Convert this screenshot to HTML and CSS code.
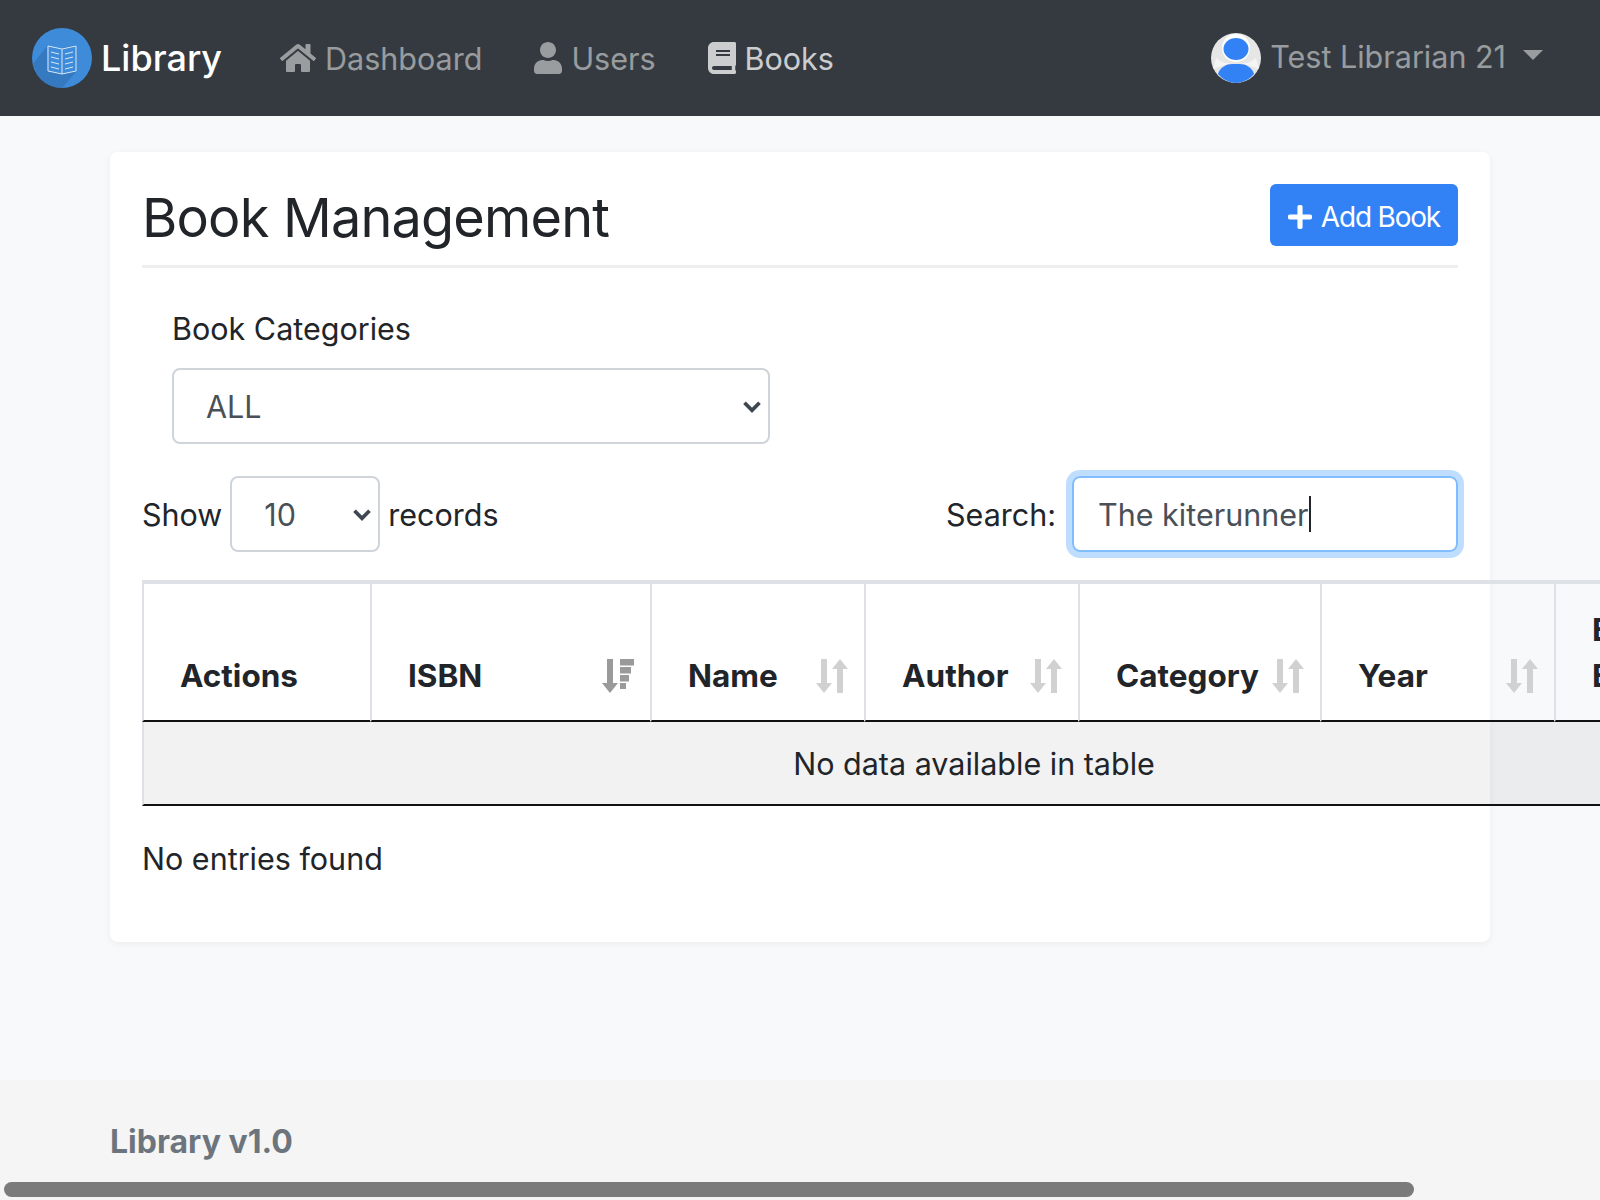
FILE: index.html
```html
<!DOCTYPE html>
<html lang="en">
<head>
  <meta charset="UTF-8">
  <title>Book Management</title>
  <link rel="stylesheet" href="styles.css">
</head>
<body>

  <nav class="navbar">
    <a class="brand">
      <svg class="brand-logo" viewBox="0 0 60 60">
        <circle cx="30" cy="30" r="30" fill="#3d8bd9"/>
        <path d="M15 46 L16 23 L44 17 L44 44 L30 60 A30 30 0 0 1 6 48 L1 36 L15 18 Z" fill="#2f6cab" opacity="0.55"/>
        <path d="M16 18 L30 21 L44 18 V43 L30 46 L16 43 Z" fill="#3d8bd9" stroke="#d7e8f8" stroke-width="1"/>
        <path d="M30 21 V46 M19 24 L27 26 M19 29 L27 31 M19 34 L27 36 M19 39 L27 41 M33 26 L41 24 M33 31 L41 29 M33 36 L41 34 M33 41 L41 39" stroke="#d7e8f8" stroke-width="1" fill="none"/>
      </svg>
      <span>Library</span>
    </a>
    <a class="nav-link">
      <svg class="nav-icon home" viewBox="0 0 576 512"><path d="M280.37 148.26L96 300.11V464a16 16 0 0 0 16 16l112.06-.29a16 16 0 0 0 15.92-16V368a16 16 0 0 1 16-16h64a16 16 0 0 1 16 16v95.64a16 16 0 0 0 16 16.05L464 480a16 16 0 0 0 16-16V300L295.67 148.26a12.19 12.19 0 0 0-15.3 0zM571.6 251.47L488 182.56V44.05a12 12 0 0 0-12-12h-56a12 12 0 0 0-12 12v72.61L318.47 43a48 48 0 0 0-61 0L4.34 251.47a12 12 0 0 0-1.6 16.9l25.5 31A12 12 0 0 0 45.15 301l235.22-193.74a12.19 12.19 0 0 1 15.3 0L530.9 301a12 12 0 0 0 16.9-1.6l25.5-31a12 12 0 0 0-1.7-16.93z"/></svg>
      Dashboard
    </a>
    <a class="nav-link">
      <svg class="nav-icon" viewBox="0 0 448 512"><path d="M224 256c70.7 0 128-57.3 128-128S294.7 0 224 0 96 57.3 96 128s57.3 128 128 128zm89.6 32h-16.7c-22.2 10.2-46.9 16-72.9 16s-50.6-5.8-72.9-16h-16.7C60.2 288 0 348.2 0 422.4V464c0 26.5 21.5 48 48 48h352c26.5 0 48-21.5 48-48v-41.6c0-74.2-60.2-134.4-134.4-134.4z"/></svg>
      Users
    </a>
    <a class="nav-link active">
      <svg class="nav-icon" viewBox="0 0 448 512"><path d="M448 360V24c0-13.3-10.7-24-24-24H96C43 0 0 43 0 96v320c0 53 43 96 96 96h328c13.3 0 24-10.7 24-24v-16c0-7.5-3.5-14.3-8.9-18.7-4.2-15.4-4.2-59.3 0-74.7 5.4-4.3 8.9-11.1 8.9-18.6zM128 134c0-3.3 2.7-6 6-6h212c3.3 0 6 2.7 6 6v20c0 3.3-2.7 6-6 6H134c-3.3 0-6-2.7-6-6v-20zm0 64c0-3.3 2.7-6 6-6h212c3.3 0 6 2.7 6 6v20c0 3.3-2.7 6-6 6H134c-3.3 0-6-2.7-6-6v-20zm253.4 250H96c-17.7 0-32-14.3-32-32 0-17.6 14.4-32 32-32h285.4c-1.9 17.1-1.9 46.9 0 64z"/></svg>
      Books
    </a>
    <a class="user-menu">
      <svg class="avatar" viewBox="0 0 50 50">
        <circle cx="25" cy="25" r="25" fill="#e6e6e6"/>
        <circle cx="25" cy="15" r="14" fill="#fff"/>
        <path d="M5 25 Q10 29 14 30 H36 Q40 29 45 25 L48 36 L30 30 H20 L2 36 Z" fill="#f4f4f4"/>
        <ellipse cx="25" cy="16" rx="12.500" ry="11" fill="#3282f6"/>
        <path d="M7 41 C9 34 16 31 21 31 H29 C34 31 41 34 43 41 A25 25 0 0 1 25 50 A25 25 0 0 1 7 41 Z" fill="#3282f6"/>
      </svg>
      <span>Test Librarian 21</span>
      <i class="caret-down"></i>
    </a>
  </nav>

  <main class="content">
    <section class="card">
      <div class="card-head">
        <h1>Book Management</h1>
        <button class="btn-add">
          <svg viewBox="0 0 448 512"><path d="M416 208H272V64c0-17.67-14.33-32-32-32h-32c-17.67 0-32 14.33-32 32v144H32c-17.67 0-32 14.33-32 32v32c0 17.67 14.33 32 32 32h144v144c0 17.67 14.33 32 32 32h32c17.67 0 32-14.33 32-32V304h144c17.67 0 32-14.33 32-32v-32c0-17.67-14.33-32-32-32z"/></svg>
          Add Book
        </button>
      </div>

      <div class="category-group">
        <label for="category">Book Categories</label>
        <div class="select-wrap wide">
          <select id="category"><option>ALL</option></select>
          <svg class="chevron" viewBox="0 0 16 12"><path d="M2 3 L8 9 L14 3" /></svg>
        </div>
      </div>

      <div class="table-controls">
        <div class="show-records">
          <span>Show</span>
          <div class="select-wrap small">
            <select><option>10</option></select>
            <svg class="chevron" viewBox="0 0 16 12"><path d="M2 3 L8 9 L14 3" /></svg>
          </div>
          <span>records</span>
        </div>
        <div class="search">
          <span>Search:</span>
          <div class="search-box">The kiterunner<i class="text-cursor"></i></div>
        </div>
      </div>

      <table class="book-table">
        <colgroup>
          <col class="col-actions"><col class="col-isbn"><col class="col-name"><col class="col-author">
          <col class="col-category"><col class="col-year"><col class="col-last">
        </colgroup>
        <thead>
          <tr>
            <th>Actions</th>
            <th><div class="th-inner">ISBN
              <svg class="sort" viewBox="0 0 32 34"><path class="on" d="M5 0 H11 V24 H16 L8 34 L0 24 H5 Z"/><path class="on" d="M18 0 H32 V6.500 H18 Z M18 8 H29 V14.500 H18 Z M18 16 H27 V22.500 H18 Z M18 24 H24 V30 H18 Z"/></svg>
            </div></th>
            <th><div class="th-inner">Name
              <svg class="sort" viewBox="0 0 32 34"><path d="M5 0 H11 V24 H16 L8 34 L0 24 H5 Z"/><path d="M21 34 H27 V10 H32 L24 0 L16 10 H21 Z"/></svg>
            </div></th>
            <th><div class="th-inner">Author
              <svg class="sort" viewBox="0 0 32 34"><path d="M5 0 H11 V24 H16 L8 34 L0 24 H5 Z"/><path d="M21 34 H27 V10 H32 L24 0 L16 10 H21 Z"/></svg>
            </div></th>
            <th><div class="th-inner">Category
              <svg class="sort" viewBox="0 0 32 34"><path d="M5 0 H11 V24 H16 L8 34 L0 24 H5 Z"/><path d="M21 34 H27 V10 H32 L24 0 L16 10 H21 Z"/></svg>
            </div></th>
            <th><div class="th-inner">Year
              <svg class="sort" viewBox="0 0 32 34"><path d="M5 0 H11 V24 H16 L8 34 L0 24 H5 Z"/><path d="M21 34 H27 V10 H32 L24 0 L16 10 H21 Z"/></svg>
            </div></th>
            <th>Ebook<br>Edition</th>
          </tr>
        </thead>
        <tbody>
          <tr><td colspan="7">No data available in table</td></tr>
        </tbody>
      </table>

      <p class="table-info">No entries found</p>
    </section>
  </main>

  <footer class="footer">Library v1.0</footer>
  <div class="scrollbar"></div>

</body>
</html>
```

FILE: styles.css
```css
* {
  box-sizing: border-box;
}

html, body {
  height: 100%;
}

body {
  margin: 0;
  height: 1200px;
  overflow: hidden;
  display: flex;
  flex-direction: column;
  font-family: Inter, "Noto Sans", sans-serif;
  font-size: 30.5px;
  color: #212529;
  background: #f8f9fa;
}

/* navbar */
.navbar {
  height: 116px;
  flex: none;
  display: flex;
  align-items: center;
  padding: 0 32px;
  background: #343a40;
}

.brand {
  display: flex;
  align-items: center;
  gap: 9px;
  margin-right: 58px;
  font-size: 36px;
  font-weight: 500;
  color: #fff;
}

.brand-logo {
  width: 60px;
  height: 60px;
}

.nav-link {
  display: flex;
  align-items: center;
  gap: 9px;
  margin-right: 52px;
  color: rgba(255,255,255,.5);
  fill: rgba(255,255,255,.5);
}

.nav-link.active {
  color: rgba(255,255,255,.75);
  fill: rgba(255,255,255,.75);
}

.nav-icon {
  width: 28px;
  height: 32px;
}

.nav-icon.home {
  width: 36px;
}

.user-menu {
  margin-left: auto;
  margin-right: 25px;
  display: flex;
  align-items: center;
  color: rgba(255,255,255,.5);
}

.user-menu span {
  margin-bottom: 3px;
}

.avatar {
  width: 50px;
  height: 50px;
  margin-right: 9px;
}

.caret-down {
  margin-left: 17px;
  margin-bottom: 6px;
  border-top: 10px solid rgba(255,255,255,.5);
  border-left: 10px solid transparent;
  border-right: 10px solid transparent;
}

/* card */
.content {
  flex: 1;
  padding: 36px 110px 0;
}

.card {
  height: 790px;
  padding: 32px;
  background: #fff;
  border-radius: 8px;
  box-shadow: 0 2px 8px rgba(0,0,0,.05);
}

.card-head {
  display: flex;
  justify-content: space-between;
  align-items: flex-start;
  height: 84px;
  border-bottom: 3px solid #eee;
}

h1 {
  margin: 0;
  font-size: 54px;
  font-weight: 400;
  letter-spacing: -.8px;
  line-height: 68px;
}

.btn-add {
  display: flex;
  align-items: center;
  gap: 9px;
  height: 62px;
  padding: 3px 18px 0;
  border: none;
  border-radius: 6px;
  background: #3282f6;
  color: #fff;
  fill: #fff;
  font-family: inherit;
  font-size: 28px;
  letter-spacing: -1.2px;
}

.btn-add svg {
  width: 24px;
  height: 30px;
}

.category-group {
  padding: 43px 30px 0;
}

label {
  display: block;
  margin-bottom: 21px;
  line-height: 36px;
}

.select-wrap {
  position: relative;
  height: 76px;
}

.select-wrap.wide {
  width: 598px;
}

.select-wrap.small {
  width: 150px;
}

select {
  width: 100%;
  height: 100%;
  padding: 0 32px;
  appearance: none;
  border: 2px solid #ced4da;
  border-radius: 8px;
  background: #fff;
  color: #495057;
  font-family: inherit;
  font-size: 30.5px;
}

.chevron {
  position: absolute;
  right: 8px;
  top: 31px;
  width: 20px;
  height: 15px;
  fill: none;
  stroke: #3f4750;
  stroke-width: 3;
  pointer-events: none;
}

.table-controls {
  display: flex;
  justify-content: space-between;
  margin-top: 32px;
}

.show-records, .search {
  display: flex;
  align-items: center;
  gap: 8px;
}

.search {
  gap: 16px;
}

.search-box {
  display: flex;
  align-items: center;
  width: 386px;
  height: 76px;
  padding: 0 24px;
  border: 2px solid #80bdff;
  border-radius: 8px;
  color: #495057;
  box-shadow: 0 0 0 6px #bfdeff;
}

.text-cursor {
  width: 2px;
  height: 36px;
  background: #212529;
}

/* table */
.book-table {
  width: 1662px;
  margin-top: 28px;
  table-layout: fixed;
  border-collapse: separate;
  border-spacing: 0;
  border-top: 4px solid #dee2e6;
}

.col-actions { width: 228px; }
.col-isbn { width: 280px; }
.col-name { width: 214px; }
.col-author { width: 214px; }
.col-category { width: 242px; }
.col-year { width: 234px; }
.col-last { width: 250px; }

.book-table th {
  height: 138px;
  padding: 0 0 21px 36px;
  border-left: 2px solid #dee2e6;
  border-bottom: 2px solid #111;
  text-align: left;
  vertical-align: bottom;
  font-size: 31.5px;
  font-weight: 700;
  line-height: 46px;
}

.th-inner {
  display: flex;
  justify-content: space-between;
  align-items: center;
  padding-right: 16px;
}

.sort {
  width: 32px;
  height: 34px;
  flex: none;
  fill: #d1d1d1;
}

.sort .on {
  fill: #9a9a9a;
}

.book-table td {
  height: 84px;
  padding-top: 2px;
  border-left: 2px solid #dee2e6;
  border-bottom: 2px solid #111;
  background: rgba(0,0,0,.05);
  text-align: center;
}

.table-info {
  margin: 35px 0 0;
  line-height: 36px;
}

/* footer */
.footer {
  height: 120px;
  flex: none;
  padding: 42px 110px 0;
  background: #f5f5f5;
  color: #6c757d;
  font-size: 32px;
  font-weight: 700;
}

.scrollbar {
  position: fixed;
  left: 4px;
  bottom: 3px;
  width: 1410px;
  height: 15px;
  border-radius: 8px;
  background: #7b7b7b;
}
```
